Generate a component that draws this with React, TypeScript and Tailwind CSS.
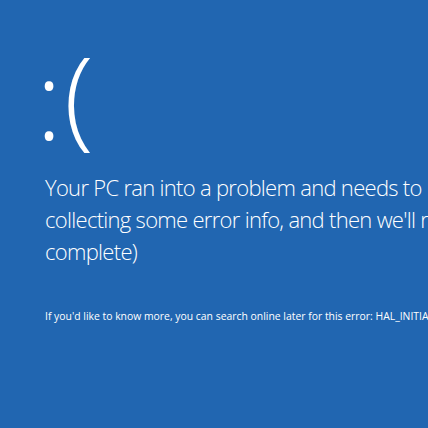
export default function App() {
  return (
    <div
      className="w-[428px] h-[428px] overflow-hidden bg-[#2166b1] text-white"
      style={{ fontFamily: '"Open Sans", "Noto Sans", sans-serif' }}
    >
      <div className="pl-[45px] pt-[33px]">
        <div className="flex items-baseline h-[130px] font-light whitespace-nowrap leading-[130px]">
          <span className="text-[109px] -ml-[9px]">:</span>
          <span className="text-[109px] ml-[2px] -translate-y-[4px]">(</span>
        </div>
        <div className="mt-[8px] text-[22px] leading-[32px] font-light tracking-[-0.7px] whitespace-nowrap">
          <p>Your PC ran into a problem and needs to restart. We're just</p>
          <p>collecting some error info, and then we'll restart for you. (0%</p>
          <p>complete)</p>
        </div>
        <p className="mt-[42px] text-[10.4px] leading-[14px] whitespace-nowrap">
          If you'd like to know more, you can search online later for this error: HAL_INITIALIZATION_FAILED
        </p>
      </div>
    </div>
  )
}
